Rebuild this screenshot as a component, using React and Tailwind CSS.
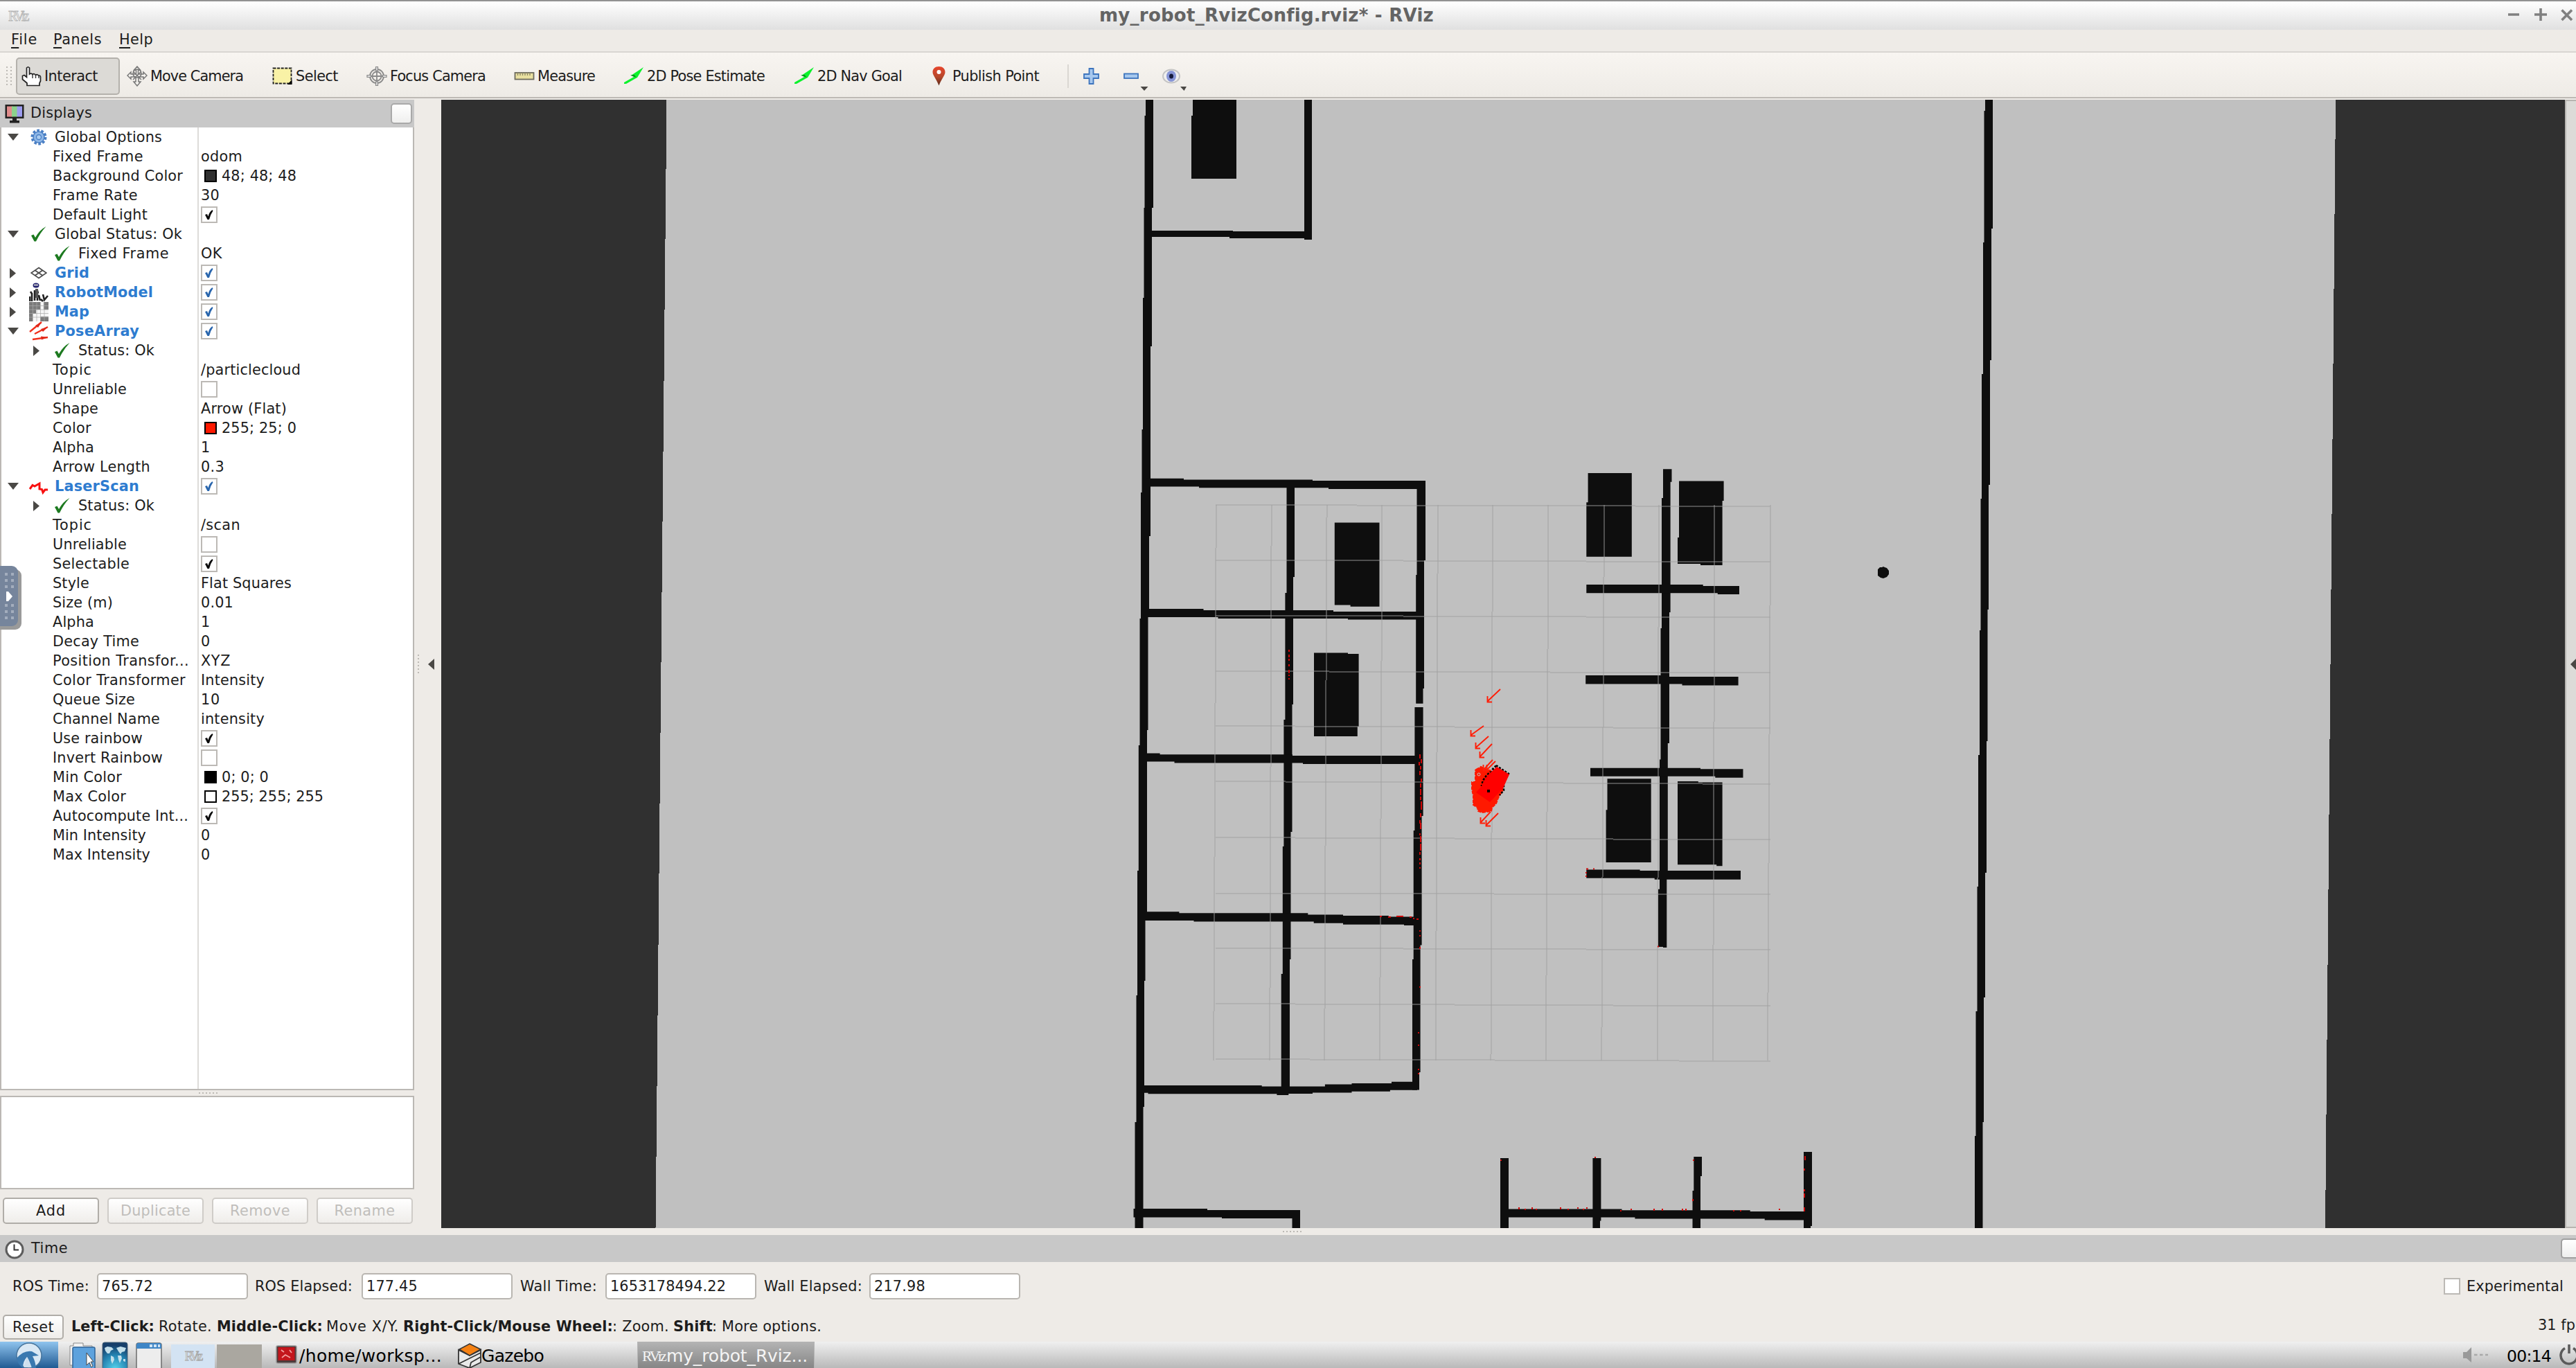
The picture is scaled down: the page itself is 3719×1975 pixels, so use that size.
import React, { useLayoutEffect, useRef } from "react";

/* Text whose tracking is adjusted so that it spans `w` pixels. */
function T({ w, children, className = "" }) {
  const ref = useRef(null);
  useLayoutEffect(() => {
    const el = ref.current;
    if (!w || !el) return;
    el.style.letterSpacing = "0px";
    const nat = el.getBoundingClientRect().width;
    el.style.letterSpacing = (w + 2 - nat) / el.textContent.length + "px";
  }, [w]);
  return (
    <span ref={ref} className={"inline-block whitespace-pre " + className}>
      {children}
    </span>
  );
}

/* ---------- toolbar icons ---------- */
const HandIcon = () => (
  <svg viewBox="0 0 30 30" className="w-[30px] h-[30px]">
    <path d="M9 28.500 V25 L2.500 19.500 V14.500 L5 13.500 L8.500 16.500 V3 Q10.500 0.500 12.500 3 V12 Q15 10 17 12.500 Q19.500 10.500 21.500 13.500 Q24 11.500 26 14.500 Q28 13.500 28.500 16 V22 L27 25 V28.500 Z" fill="#fff" stroke="#222" strokeWidth="1.700" />
    <path d="M17 12.500 V18 M21.500 13.500 V18 M26 14.500 V18" stroke="#444" strokeWidth="1.500" />
  </svg>
);
const MoveIcon = () => (
  <svg viewBox="0 0 30 30" className="w-[30px] h-[30px]" fill="none" stroke="#777" strokeWidth="1.500">
    <path d="M15 1 L19.500 6 H16.500 V12 H24 V9 L29 14 L24 19 V16 H17 V23 H20 L15 29 L10 23 H13 V16 H6 V19 L1 14 L6 9 V12 H13.500 V6 H10.500 Z" fill="#f4f2ee" />
    <circle cx="15" cy="11" r="6" />
    <path d="M9 20 L21 8 M9 8 L21 20" />
  </svg>
);
const SelectIcon = () => (
  <svg viewBox="0 0 30 30" className="w-[30px] h-[30px]">
    <rect x="1.500" y="3.500" width="26" height="22" fill="#f9f2a6" stroke="#222" strokeWidth="1.800" strokeDasharray="4 1.600" />
    <path d="M28.500 20 V27 H22 Z" fill="#000" />
  </svg>
);
const FocusIcon = () => (
  <svg viewBox="0 0 30 30" className="w-[30px] h-[30px]" fill="none" stroke="#8a8a8a" strokeWidth="1.800">
    <circle cx="15" cy="15" r="10" />
    <circle cx="15" cy="15" r="6.500" />
    <path d="M15 7 V23 M7 15 H23" />
    <path d="M13.500 1.500 H16.500 V7 H13.500 Z M13.500 23 H16.500 V28.500 H13.500 Z M1 13.500 H6.500 V16.500 H1 Z M23.500 13.500 H29 V16.500 H23.500 Z" fill="#ddd" strokeWidth="1.200" />
  </svg>
);
const RulerIcon = () => (
  <svg viewBox="0 0 30 30" className="w-[30px] h-[30px]">
    <rect x="1.500" y="10" width="27" height="9.500" fill="#e9e0a0" stroke="#6d6a5c" strokeWidth="1.800" />
    <path d="M5.500 10 V14 M9 10 V14 M12.500 10 V14 M16 10 V14 M19.500 10 V14 M23 10 V14" stroke="#8d8866" strokeWidth="1.400" />
  </svg>
);
const GreenArrow = () => (
  <svg viewBox="0 0 30 30" className="w-[30px] h-[30px]">
    <path d="M29 2 L11 14 L15 16 L1 24 V26 L4 26 L18 18 L20 17 Z" fill="#0cf22c" />
    <path d="M10 13.500 L19 17 L15.500 13 Z" fill="#0a8a1d" />
  </svg>
);
const PinIcon = () => (
  <svg viewBox="0 0 30 30" className="w-[30px] h-[30px]">
    <defs>
      <linearGradient id="pin" x1="0" y1="0" x2="0" y2="1">
        <stop offset="0" stopColor="#e8452c" />
        <stop offset=".55" stopColor="#b5472b" />
        <stop offset="1" stopColor="#5b2a1a" />
      </linearGradient>
    </defs>
    <path d="M14.500 1 C20 1 23.500 4.500 23.500 9 C23.500 14 18 19 14.500 28.500 C11 19 5.500 14 5.500 9 C5.500 4.500 9 1 14.500 1 Z" fill="url(#pin)" />
    <circle cx="14.500" cy="9" r="3" fill="#fff" />
  </svg>
);

const TOOLS = [
  { label: "Interact", w: 75, Icon: HandIcon, cls: "w-[150px] pl-[5px] h-[54px] rounded-[5px] border-2 border-[#b4b1ac] bg-[#dcdad6]" },
  { label: "Move Camera", w: 132, Icon: MoveIcon, cls: "w-[210px] pl-[10px]" },
  { label: "Select", w: 59, Icon: SelectIcon, cls: "w-[135px] pl-[10px]" },
  { label: "Focus Camera", w: 136, Icon: FocusIcon, cls: "w-[213px] pl-[11px]" },
  { label: "Measure", w: 81, Icon: RulerIcon, cls: "w-[158px] pl-[11px]" },
  { label: "2D Pose Estimate", w: 168, Icon: GreenArrow, cls: "w-[246px] pl-[11px]" },
  { label: "2D Nav Goal", w: 120, Icon: GreenArrow, cls: "w-[198px] pl-[11px]" },
  { label: "Publish Point", w: 123, Icon: PinIcon, cls: "w-[208px] pl-[8px]" },
];

/* ---------- tree icons ---------- */
const Gear = () => (
  <svg viewBox="0 0 24 24" className="w-[24px] h-[24px]">
    <circle cx="12" cy="12" r="9.500" fill="none" stroke="#4a7fc4" strokeWidth="4" strokeDasharray="3.600 2.370" />
    <circle cx="12" cy="12" r="8" fill="#8db6e6" stroke="#4a7fc4" strokeWidth="1.500" />
    <circle cx="12" cy="12" r="3.500" fill="#a9cbf0" stroke="#4a7fc4" strokeWidth="1.300" />
  </svg>
);
const Check = () => (
  <svg viewBox="0 0 24 24" className="w-[24px] h-[24px]">
    <path d="M1 14 L4.500 12.500 L7 17 Q13 6 22.500 1 Q14 10 8 22.500 L5.500 22.500 Z" fill="#1d7a20" />
  </svg>
);
const GridIcon = () => (
  <svg viewBox="0 0 24 24" className="w-[24px] h-[24px]" fill="none" stroke="#4a4a4a" strokeWidth="1.700">
    <path d="M12 4.500 L23 12 L12 19.500 L1 12 Z M6.500 8.200 L17.500 15.800 M17.500 8.200 L6.500 15.800" />
  </svg>
);
const RobotIcon = () => (
  <svg viewBox="0 0 28 28" className="w-[28px] h-[28px]">
    <ellipse cx="10" cy="4" rx="4.500" ry="3.500" fill="#23236f" />
    <rect x="7" y="2.500" width="6" height="2" fill="#ccc" />
    <path d="M2 13 L4 16 V27 M1 20 V27 M8 11 V26 M12 11 V26 M8 14 H14 M14 18 L16 26 M20 17 L22 25 L27 19 M17 24 L20 27" stroke="#222" strokeWidth="2.600" fill="none" />
    <path d="M9 9 H13 V22 H9 Z" fill="#555" />
  </svg>
);
const MapIcon = () => (
  <svg viewBox="0 0 28 28" className="w-[28px] h-[28px]">
    <path d="M0 0 H28 V28 H0 Z" fill="#f6f6f6" />
    <path d="M0 0 H16 V11 H10 V17 H5 V28 H0 Z M21 0 H28 V11 H21 Z M16 21 H28 V28 H16 Z" fill="#7b7b7b" />
    <path d="M5.500 0 V28 M11 0 V28 M16.500 0 V28 M22 0 V28 M0 5.500 H28 M0 11 H28 M0 16.500 H28 M0 22 H28" stroke="#a9a9a9" strokeWidth=".7" />
  </svg>
);
const PoseIcon = () => (
  <svg viewBox="0 0 28 28" className="w-[28px] h-[28px]" stroke="#f0301c" strokeWidth="2.400" fill="#e0281a">
    <path d="M1 15 L18 1 M8 18 L27 8 M5 26 L27 23" />
    <path d="M9 6 L18 1 L13 9 Z M17 11 L27 8 L20 15 Z M17 21.500 L27 23 L18 26.500 Z" stroke="none" />
  </svg>
);
const LaserIcon = () => (
  <svg viewBox="0 0 28 28" className="w-[28px] h-[28px]" fill="none" stroke="#f81010" strokeWidth="3">
    <path d="M1 18 L5 12.500 L8 14 L15 10 V18 L18.500 18.500 L20 23 L23 19 L27 19" />
  </svg>
);

const TriDown = () => (
  <svg viewBox="0 0 16 10" className="w-[16px] h-[10px]"><path d="M0 0 H16 L8 10 Z" fill="#4a4845" /></svg>
);
const TriRight = () => (
  <svg viewBox="0 0 9 15" className="w-[9px] h-[15px]"><path d="M0 0 L9 7.500 L0 15 Z" fill="#4a4845" /></svg>
);

function Box({ on, blue }) {
  return (
    <span className="flex w-[24px] h-[24px] items-center justify-center border-2 border-[#bcb9b5] bg-white">
      {on && (
        <svg viewBox="0 0 16 18" className="w-[16px] h-[18px]">
          <path d="M2 9 L5 8 L6.500 11.500 Q8 5 12.500 2 L13.500 3.500 Q9.500 9 8 16 H5.500 Z" fill={blue ? "#2a66ad" : "#0a0a0a"} />
        </svg>
      )}
    </span>
  );
}

const ROWS = [
  { lvl: 0, open: 1, icon: Gear, n: "Global Options", w: 153 },
  { n: "Fixed Frame", w: 129, v: "odom", vw: 58 },
  { n: "Background Color", w: 186, sw: "bg-[#303030]", v: "48; 48; 48", vw: 106 },
  { n: "Frame Rate", w: 121, v: "30", vw: 25 },
  { n: "Default Light", w: 135, box: 1 },
  { lvl: 0, open: 1, icon: Check, n: "Global Status: Ok", w: 182 },
  { lvl: 1, icon: Check, n: "Fixed Frame", w: 129, v: "OK", vw: 29 },
  { lvl: 0, open: 0, icon: GridIcon, n: "Grid", w: 48, bold: 1, box: 1 },
  { lvl: 0, open: 0, icon: RobotIcon, n: "RobotModel", w: 140, bold: 1, box: 1 },
  { lvl: 0, open: 0, icon: MapIcon, n: "Map", w: 48, bold: 1, box: 1 },
  { lvl: 0, open: 1, icon: PoseIcon, n: "PoseArray", w: 120, bold: 1, box: 1 },
  { lvl: 1, open: 0, icon: Check, n: "Status: Ok", w: 108 },
  { n: "Topic", w: 55, v: "/particlecloud", vw: 142 },
  { n: "Unreliable", w: 105, box: 0 },
  { n: "Shape", w: 64, v: "Arrow (Flat)", vw: 122 },
  { n: "Color", w: 54, sw: "bg-[#ff1900]", v: "255; 25; 0", vw: 106 },
  { n: "Alpha", w: 58, v: "1" },
  { n: "Arrow Length", w: 139, v: "0.3", vw: 32 },
  { lvl: 0, open: 1, icon: LaserIcon, n: "LaserScan", w: 120, bold: 1, box: 1 },
  { lvl: 1, open: 0, icon: Check, n: "Status: Ok", w: 108 },
  { n: "Topic", w: 55, v: "/scan", vw: 55 },
  { n: "Unreliable", w: 105, box: 0 },
  { n: "Selectable", w: 109, box: 1 },
  { n: "Style", w: 51, v: "Flat Squares", vw: 129 },
  { n: "Size (m)", w: 85, v: "0.01", vw: 45 },
  { n: "Alpha", w: 58, v: "1" },
  { n: "Decay Time", w: 123, v: "0" },
  { n: "Position Transfor...", w: 195, v: "XYZ", vw: 41 },
  { n: "Color Transformer", w: 190, v: "Intensity", vw: 90 },
  { n: "Queue Size", w: 117, v: "10", vw: 26 },
  { n: "Channel Name", w: 153, v: "intensity", vw: 90 },
  { n: "Use rainbow", w: 128, box: 1 },
  { n: "Invert Rainbow", w: 157, box: 0 },
  { n: "Min Color", w: 98, sw: "bg-black", v: "0; 0; 0", vw: 66 },
  { n: "Max Color", w: 104, sw: "bg-white", v: "255; 255; 255", vw: 145 },
  { n: "Autocompute Int...", w: 194, box: 1 },
  { n: "Min Intensity", w: 133, v: "0" },
  { n: "Max Intensity", w: 139, v: "0" },
];

function Row({ r }) {
  const Icon = r.icon;
  return (
    <div className="flex h-[28px]">
      <div className="flex w-[284px] h-[28px] items-center">
        {Icon ? (
          <>
            {r.lvl === 1 && <span className="w-[34px]" />}
            <span className="flex w-[33px] h-[28px] items-center justify-center shrink-0">
              {r.open === 1 ? <TriDown /> : r.open === 0 ? <TriRight /> : null}
            </span>
            <span className="flex w-[42px] items-center justify-center shrink-0"><Icon /></span>
            <span className="w-[2px] shrink-0" />
            <T w={r.w} className={r.bold ? "font-bold text-[#2e7cd0]" : ""}>{r.n}</T>
          </>
        ) : (
          <span className="pl-[74px]"><T w={r.w}>{r.n}</T></span>
        )}
      </div>
      <div className="flex items-center pl-[4px]">
        {r.box !== undefined && <Box on={r.box === 1} blue={r.bold} />}
        {r.sw && <span className={"ml-[5px] mr-[7px] w-[18px] h-[18px] border-2 border-black " + r.sw} />}
        {r.v && <T w={r.vw}>{r.v}</T>}
      </div>
    </div>
  );
}

/* ---------- map ---------- */
const WALLS = [
  "M1654 144 H1665 V300 H1663 V500 H1661 V774 H1659 V891 H1657.500 V1054 H1656 V1318 H1653.500 V1416 H1652 V1598 H1650.500 V1774 H1638.500 V1757.500 H1636.500 V1745 H1638.500 V1620 H1640.500 V1437 H1642 V1257 H1643.800 V1076 H1645.500 V893 H1647 V711 H1648.500 V620 H1650 V430 H1651.500 V300 H1652.500 V167 H1654 Z",
  "M1722 144 H1785 V258 H1720 V167 H1722 Z",
  "M1883 144 H1894 V346 H1883 V344 H1775 V342 H1655 V333 H1780 V334 H1883 Z",
  "M1640 1745 H1743 V1747 H1877 V1774 H1865.500 V1759 H1764 V1757.500 H1640 Z",
  "M1655 690.700 H1709 V692.500 H1895 V694 H2058 V809 H2056 V994 H2054.500 V1015.700 H2044.200 V830 H2045.500 V706 H1918 V704.300 H1731 V702.500 H1655 Z",
  "M1857.500 700 H1869 V833 H1867 V1017 H1865.500 V1201 H1863.500 V1385 H1862 V1575 H1849.700 V1406 H1851.800 V1222 H1853.400 V1039 H1855.400 V856 H1857.500 Z",
  "M2042.400 1021 H2054.600 V1178 H2052.600 V1364.600 H2050.600 V1548 H2049 V1573.500 H2039 V1385 H2040.700 V1199 H2042.400 Z",
  "M1650 879 H1737.500 V881 H1925 V883 H2050 V894.600 H1946 V893 H1758.500 V891 H1650 Z",
  "M1926.800 754.600 H1991.500 V875.700 H1949.600 V873.600 H1926.800 Z",
  "M1897 942.500 H1946 V944 H1961.600 V1049 H1959.800 V1063 H1897 Z",
  "M1650 1087.500 H1674.600 V1089.300 H1866 V1091 H2048 V1103 H1881 V1101.400 H1695.500 V1099.600 H1650 Z",
  "M1648 1316.300 H1702.400 V1318.300 H1888.300 V1320.600 H1939 V1322 H2004.800 V1323.600 H2046 V1336 H2027 V1334.700 H1939 V1332.800 H1896.700 V1330.500 H1723.500 V1329 H1648 Z",
  "M1645 1567 H1821.700 V1568.500 H1912.900 V1565.500 H1951.500 V1564 H2009 V1561.700 H2046 V1573.800 H2006.900 V1575.800 H1951.500 V1577.500 H1895 V1579 H1860.300 V1581 H1843.400 V1579.300 H1657.500 V1577.700 H1645 Z",
  "M2166 1672 H2178 V1745.400 H2299.400 V1672 H2311.400 V1745.400 H2341.500 V1747.300 H2443.500 V1719 H2445.300 V1670 H2457 V1698 H2455 V1747.300 H2526.700 V1749 H2604 V1663 H2616 V1770 H2614 V1774 H2604 V1761.400 H2547.700 V1759.500 H2455 V1774 H2443.500 V1759.500 H2360.400 V1757.600 H2311.400 V1762.600 H2310 V1774 H2299.400 V1757.600 H2178 V1774 H2166 Z",
  "M2401 677.300 H2413.500 V695.700 H2411.600 V884 H2410 V1073 H2407.800 V1269 H2406.300 V1368 H2401 V1367 H2394 V1283.700 H2396 V1096.600 H2397.500 V907 H2399 V719 H2401 Z",
  "M2292.600 683 H2355.800 V803.800 H2290.300 V725.300 H2292.600 Z",
  "M2424 694.500 H2488.600 V723 H2486.600 V816 H2455 V814 H2422 V776 H2424 Z",
  "M2290.300 844 H2458.700 V846 H2511 V858 H2479.800 V856.300 H2290.300 Z",
  "M2289.200 975 H2410 V977 H2509.600 V989.500 H2428.500 V987.500 H2289.200 Z",
  "M2296 1108.700 H2455 V1110.200 H2516.500 V1122.800 H2476.300 V1120.800 H2296 Z",
  "M2320.500 1124.200 H2383.700 V1245 H2318.600 V1169.300 H2320.500 Z",
  "M2422 1128 H2451.800 V1129.600 H2486.600 V1250.300 H2478.200 V1248.300 H2422 Z",
  "M2290.300 1255.600 H2367.600 V1257 H2513 V1269.700 H2388.700 V1267.700 H2290.300 Z",
  "M2866 144 H2877 V330 H2875 V520 H2873 V700 H2871 V880 H2869.500 V1070 H2868 V1260 H2866 V1440 H2864 V1620 H2862.500 V1774 H2851 V1640 H2852.500 V1460 H2854.500 V1280 H2856 V1090 H2858 V910 H2859.500 V720 H2861 V540 H2863 V350 H2864.500 V160 H2866 Z",
  "M2711 822 L2714 819 H2717 L2719 818 L2721 819 L2724 820 L2727 824 V829 L2724 833 L2719 835 L2715 834 L2711 831 Z",
];
const VX = [[1755.8, 1752.2], [1835.7, 1833.2], [1915.6, 1912.2], [1995.5, 1992], [2075.9, 2072.8], [2155, 2152.5], [2235.4, 2232], [2316, 2312.3], [2395, 2392.8], [2475.5, 2473], [2556.3, 2552]];
const HY = [[729, 731], [808.5, 811.5], [888.5, 891.5], [969, 971.5], [1048, 1051.5], [1128, 1132], [1209, 1212.5], [1289.5, 1291.5], [1368.5, 1371.5], [1449, 1452.5], [1529, 1532]];

const ARROWS = [[2166, 995, 2148, 1012], [2142, 1048, 2124, 1061], [2149, 1063, 2131, 1079], [2154, 1074, 2137, 1092], [2155, 1097, 2142, 1111], [2159, 1099, 2147, 1111], [2152, 1172, 2138, 1187], [2163, 1174, 2146, 1191]];

const LASER = "M1861 938 v3 M1861 945 v4 M1861 951 v3 M1861 959 v3 M1861 967 v5 M1861 974 v2 M1861 979 v2 M2050 1089 v6 M2052 1096 v6 M2049 1100 v5 M2051 1106 v5 M2050 1113 v6 M2052 1124 v5 M2051 1131 v6 M2051 1139 v9 M2051 1150 v5 M2052 1157 v12 M2051 1174 v6 M2050 1184 v5 M2051 1188 v9 M2050 1203 v3 M2051 1207 v9 M2051 1218 v10 M2050 1230 v4 M2050 1239 v3 M2050 1245 v3 M2050 1252 v2 M2050 1343 v2 M2050 1350 v2 M2050 1367 v3 M2050 1424 v2 M2048 1490 v2 M2048 1508 v2 M2048 1543 v2 M2048 1549 v2 M1992 1323 h3 M2004 1324 h4 M2016 1323 h10 M2035 1324 h3 M2040 1326 h2 M2045 1327 h3 M2290 1254.500 h3 M2300 1254.500 h2 M2290 1259 v2 M2290 1264 v2 M2393 1366.500 h2 M2193 1743 v3 M2202 1745 v2 M2212 1743 v3 M2218 1745 v2 M2253 1743 v3 M2264 1745 v2 M2278 1743 v2 M2286 1745 v2 M2291 1743 v2 M2340 1747 v2 M2355 1745 v2 M2388 1745 v3 M2400 1745 v3 M2429 1745 v3 M2434 1745 v3 M2503 1747 v2 M2513 1747 v2 M2569 1745 v2 M2605 1743 v6 M2605 1717 v3 M2605 1723 v6 M2605 1687 v3 M2606 1669 v6 M2167 1674 v2 M2303 1670 v2 M2445 1674 v2 M2444 1731 v3";

function Arrow({ a }) {
  const [x1, y1, x2, y2] = a;
  return <path d={`M${x1} ${y1} L${x2} ${y2} m-0.500 -7 v8.500 h6.500`} />;
}

function MapView() {
  return (
    <svg viewBox="637 144 3066 1629" className="block w-[3066px] h-[1629px] bg-[#303030]">
      <path d="M962.500 144 H3372 V149 L3357 1773 H946.500 Z" fill="#c0c0c0" shapeRendering="crispEdges" />
      <g fill="#0e0e0e">{WALLS.map((d, i) => <path key={i} d={d} />)}</g>
      <g stroke="#a0a0a0" strokeOpacity=".45" strokeWidth="2" shapeRendering="crispEdges">
        {VX.map(([a, b], i) => <line key={i} x1={a} y1="729" x2={b} y2="1531" />)}
        {HY.map(([a, b], i) => <line key={i} x1="1755" y1={a} x2="2556" y2={b} />)}
      </g>
      <path d={LASER} stroke="#d00808" strokeWidth="2" fill="none" />
      <path d="M2131 1111 L2138 1107 L2142 1109 L2150 1112 L2168 1122 L2170 1140 L2163 1152 L2160 1160 L2154 1166 L2153 1171 L2147 1172 L2140 1173 L2134 1171 L2133 1166 L2127 1162 V1149 L2125 1139 V1129 H2130 V1112 Z" fill="#ff1900" stroke="#ff1900" strokeWidth="2" strokeDasharray="5 1.500" />
      <circle cx="2135" cy="1118" r="2" fill="none" stroke="#c0c0c0" />
      <path d="M2160 1105 L2178 1117 L2171 1130 V1141 L2165 1148" fill="none" stroke="#000" strokeWidth="2.500" strokeDasharray="3 2" />
      <path d="M2160 1105.500 L2146 1120 L2141 1127 L2139 1135" fill="none" stroke="#000" strokeWidth="3" strokeDasharray="3 2" />
      <path d="M2161 1107 L2179 1118 L2170 1138 L2151 1158 L2131 1144 L2139 1135 Q2143 1124 2149 1118 Z" fill="#ff0000" />
      <rect x="2147" y="1140" width="4" height="4" fill="#000" />
      <g fill="none" stroke="#ff1e08" strokeWidth="1.900">{ARROWS.map((a, i) => <Arrow key={i} a={a} />)}</g>
    </svg>
  );
}

/* ---------- bottom area ---------- */
function Field({ label, lw, v, vw, gap }) {
  return (
    <>
      <span className={gap}><T w={lw}>{label}</T></span>
      <span className="flex h-[38px] w-[218px] items-center rounded-[5px] border-2 border-[#b9b6b1] bg-white pl-[5px]">
        <T w={vw}>{v}</T>
      </span>
    </>
  );
}

function Btn({ label, w, off }) {
  return (
    <div className={"flex h-[38px] w-[139px] items-center justify-center rounded-[5px] border-2 bg-gradient-to-b from-white to-[#efedea] " + (off ? "border-[#cfccc8] text-[#c0bebb]" : "border-[#b0ada8]")}>
      <T w={w}>{label}</T>
    </div>
  );
}

const Dots = ({ col }) => (
  <span className={"flex gap-[3px] " + (col ? "flex-col" : "")}>
    {[0, 1, 2, 3, 4, 5].map((i) => <span key={i} className="h-[2px] w-[2px] bg-[#bdbab5]" />)}
  </span>
);

export default function App() {
  return (
    <div className="relative flex h-[1975px] w-[3719px] flex-col overflow-hidden bg-[#eeebe7] font-['DejaVu_Sans',sans-serif] text-[20.800px] leading-[28px] text-[#1c1c1c]">
      {/* title bar */}
      <div className="flex h-[43px] shrink-0 items-center border-t-2 border-[#929292] bg-gradient-to-b from-white to-[#e0e0e0]">
        <div className="flex w-[1587px] pl-[12px]">
          <span className="font-['Liberation_Serif',serif] text-[20px] leading-[20px] tracking-[-3px] text-[#f2f2f2] [-webkit-text-stroke:0.8px_#b6b6b6]">RViz</span>
        </div>
        <T w={480} className="pb-[2px] text-[26px] font-bold leading-[36px] text-[#646464]">my_robot_RvizConfig.rviz* - RViz</T>
        <svg viewBox="0 0 98 24" className="ml-auto mr-[1px] h-[24px] w-[98px] mb-[2px]" stroke="#808080" strokeWidth="3.600">
          <path d="M1 11 H17 M39 11 H57 M48 2 V20 M78.500 4.500 L93 19 M93 4.500 L78.500 19" />
        </svg>
      </div>

      {/* menu bar */}
      <div className="flex h-[33px] shrink-0 items-center border-b-2 border-[#d9d6d2] pb-[3px]">
        <div className="w-[61px] ml-[16px]"><T w={36}><u className="underline-offset-4 decoration-2">F</u>ile</T></div>
        <div className="w-[95px]"><T w={68}><u className="underline-offset-4 decoration-2">P</u>anels</T></div>
        <div><T w={47}><u className="underline-offset-4 decoration-2">H</u>elp</T></div>
      </div>

      {/* toolbar */}
      <div className="flex h-[66px] shrink-0 items-center border-b-2 border-[#bdb9b4] bg-gradient-to-b from-[#f8f5f1] to-[#eeebe6] pt-[3px]">
        <div className="flex w-[23px] gap-[4px] pl-[9px]"><Dots col /><Dots col /></div>
        {TOOLS.map(({ label, w, Icon, cls }) => (
          <div key={label} className={"box-border flex shrink-0 items-center gap-[4px] " + cls}>
            <Icon />
            <T w={w}>{label}</T>
          </div>
        ))}
        <div className="h-[34px] w-[2px] bg-[#dad7d2]" />
        <svg viewBox="0 0 170 50" className="h-[50px] w-[170px]">
          <path d="M29.500 14 H35.500 V22 H43 V28 H35.500 V36 H29.500 V28 H22 V22 H29.500 Z" fill="#a7c8ee" stroke="#3d74bd" strokeWidth="1.800" />
          <rect x="80" y="21.500" width="20" height="6.500" fill="#a7c8ee" stroke="#3d74bd" strokeWidth="1.800" />
          <path d="M103.500 40 H114.500 L109 46 Z M161 40 H170 L166.500 46 Z" fill="#4a4845" />
          <ellipse cx="148" cy="25" rx="12" ry="9.500" fill="#efefef" stroke="#c4c4c4" strokeWidth="2" />
          <ellipse cx="148" cy="25" rx="7" ry="8" fill="#8795d6" />
          <ellipse cx="148" cy="25" rx="3" ry="3.500" fill="#151a3c" />
        </svg>
      </div>

      <div className="h-[2px] shrink-0" />

      {/* main area */}
      <div className="flex h-[1629px] shrink-0">
        <div className="flex w-[598px] flex-col">
          <div className="flex h-[40px] items-center bg-[#c8c8c8] pl-[6px] pr-[3px]">
            <svg viewBox="0 0 30 30" className="h-[30px] w-[30px]">
              <rect x="1.500" y="2" width="27" height="20" fill="#222" />
              <rect x="4" y="4.500" width="8" height="15" fill="#e08c8c" />
              <rect x="11" y="4.500" width="8" height="15" fill="#8cd28c" />
              <rect x="18.500" y="4.500" width="7.500" height="15" fill="#9c9cf0" />
              <path d="M12 22 H18 V25 H22 V28.500 H8 V25 H12 Z" fill="#222" />
            </svg>
            <span className="ml-[8px] pb-[2px]"><T w={87}>Displays</T></span>
            <span className="ml-auto h-[30px] w-[31px] rounded-[5px] border-2 border-[#a9a9a9] bg-gradient-to-b from-white to-[#efefee]" />
          </div>
          <div className="relative h-[1390px] border-x-2 border-b-2 border-[#bbb8b4] bg-white">
            <div className="flex flex-col">
              {ROWS.map((r, i) => <Row key={i} r={r} />)}
            </div>
            <div className="absolute left-[283px] top-0 h-full w-[2px] bg-[#dddbd9]" />
          </div>
          <div className="flex h-[8px] items-center pl-[287px]"><Dots /></div>
          <div className="h-[135px] border-2 border-[#bbb8b4] bg-white" />
          <div className="flex gap-[12px] pl-[4px] pt-[12px]">
            <Btn label="Add" w={41} />
            <Btn label="Duplicate" w={99} off />
            <Btn label="Remove" w={85} off />
            <Btn label="Rename" w={86} off />
          </div>
        </div>
        <div className="flex w-[39px] items-center gap-[13px] pl-[5px]">
          <Dots col />
          <svg viewBox="0 0 9 16" className="h-[16px] w-[9px]"><path d="M9 0 V16 L0 8 Z" fill="#4a4845" /></svg>
        </div>
        <MapView />
        <div className="flex flex-1 items-center justify-end border-l-2 border-y-2 border-[#b8b5b1] bg-[#dcdbd8]">
          <svg viewBox="0 0 8 16" className="h-[16px] w-[8px]"><path d="M8 0 V16 L0 8 Z" fill="#4a4845" /></svg>
        </div>
      </div>

      <div className="flex h-[10px] shrink-0 items-center pl-[1852px]"><Dots /></div>

      {/* time panel */}
      <div className="flex h-[39px] shrink-0 items-center bg-[#c8c8c8] pl-[6px]">
        <svg viewBox="0 0 30 30" className="h-[30px] w-[30px]">
          <circle cx="15" cy="16" r="12" fill="#fff" stroke="#5d5d5d" strokeWidth="3" />
          <path d="M14.500 8.500 V16.500 H21" fill="none" stroke="#333" strokeWidth="2" />
        </svg>
        <span className="ml-[9px] pb-[1px]"><T w={51}>Time</T></span>
        <span className="ml-auto h-[29px] w-[22px] rounded-l-[5px] border-2 border-r-0 border-[#a0a0a0] bg-gradient-to-b from-white to-[#efefee]" />
      </div>
      <div className="flex h-[70px] shrink-0 items-center">
        <Field gap="w-[122px] ml-[18px]" label="ROS Time:" lw={109} v="765.72" vw={72} />
        <Field gap="w-[154px] ml-[10px]" label="ROS Elapsed:" lw={139} v="177.45" vw={72} />
        <Field gap="w-[123px] ml-[11px]" label="Wall Time:" lw={109} v="1653178494.22" vw={165} />
        <Field gap="w-[152px] ml-[11px]" label="Wall Elapsed:" lw={140} v="217.98" vw={72} />
        <span className="ml-auto h-[24px] w-[24px] border-2 border-[#bcb9b5] bg-white" />
        <span className="ml-[9px] w-[158px]"><T w={138}>Experimental</T></span>
      </div>
      <div className="flex h-[45px] shrink-0 items-center pl-[4px]">
        <span className="mt-[3px] flex h-[36px] w-[88px] items-center justify-center rounded-[5px] border-2 border-[#b0ada8] bg-gradient-to-b from-white to-[#efedea]"><T w={58}>Reset</T></span>
        <div className="ml-[11px] flex">
          <span className="w-[126px]"><T w={118} className="font-bold">Left-Click:</T></span>
          <span className="w-[84px]"><T w={75}>Rotate.</T></span>
          <span className="w-[158px]"><T w={151} className="font-bold">Middle-Click:</T></span>
          <span className="w-[111px]"><T w={103}>Move X/Y.</T></span>
          <span className="w-[302px]"><T w={301} className="font-bold">Right-Click/Mouse Wheel:</T></span>
          <span className="w-[88px]"><T w={80}>: Zoom.</T></span>
          <span className="w-[56px]"><T w={55} className="font-bold">Shift</T></span>
          <T w={156}>: More options.</T>
        </div>
        <span className="ml-auto w-[55px] pb-[4px]"><T w={52}>31 fp</T></span>
      </div>

      {/* taskbar */}
      <div className="flex h-[38px] shrink-0 items-center bg-gradient-to-b from-[#f0f0f0] to-[#b9b9b9] text-[25px] leading-[38px]">
        <div className="flex h-[38px] w-[84px] justify-center bg-gradient-to-b from-[#8fc4ee] to-[#1f5b93]">
          <svg viewBox="0 0 40 38" className="h-[38px] w-[40px]">
            <circle cx="20" cy="20" r="18" fill="#d9e8f4" stroke="#47759c" strokeWidth="1.500" />
            <path d="M2 24 Q12 12 24 14 L34 20 L25 21 Q29 28 30 38 H24 Q20 26 17 22 Q11 28 11 38 Q3 32 2 24 Z" fill="#3a79b0" />
            <path d="M17 22 L23 37 H12 Z" fill="#cfe0ee" />
          </svg>
        </div>
        <svg viewBox="0 0 38 38" className="ml-[16px] h-[38px] w-[38px]">
          <path d="M1 6 H6 V2 H20 V6 H33 V34 H1 Z" fill="#f2f2f2" stroke="#888" />
          <rect x="5" y="8" width="32" height="32" rx="2" fill="#5da2dd" stroke="#2d6398" strokeWidth="1.500" />
          <path d="M25 16 V34 L29 30 L32 37 L34 35 L31 29 H35 Z" fill="#fff" stroke="#444" />
        </svg>
        <svg viewBox="0 0 38 38" className="ml-[9px] h-[38px] w-[38px]">
          <defs>
            <radialGradient id="glow" cx="0.5" cy="1" r="0.9">
              <stop offset="0" stopColor="#56d6ee" />
              <stop offset="0.6" stopColor="#2382b0" />
              <stop offset="1" stopColor="#173f6a" />
            </radialGradient>
          </defs>
          <rect x="1" y="1" width="36" height="39" rx="3" fill="url(#glow)" stroke="#4d6478" />
          <path d="M4 9 L8 7 L14 8 L17 11 L13 13 L11 17 L8 17 L5 13 Z M21 9 L27 7 L35 9 L33 14 L29 15 L27 18 L24 14 Z M13 20 L17 22 L18 26 L15 32 L13 27 Z M23 20 L28 20 L29 24 L26 31 L24 26 Z M31 25 L34 25 L34 29 L31 28 Z" fill="#c3dfea" />
        </svg>
        <svg viewBox="0 0 38 38" className="ml-[11px] h-[38px] w-[38px]">
          <rect x="1" y="2" width="36" height="38" rx="3" fill="#ededed" stroke="#6c6c6c" strokeWidth="1.500" />
          <path d="M1 10 V5 Q1 2 4 2 H34 Q37 2 37 5 V10 Z" fill="#3f86c6" />
          <path d="M20 6 H24 M26 6 H30 M32 6 H35" stroke="#cfe3f5" strokeWidth="4" />
        </svg>
        <div className="ml-[13px] mt-[4px] flex h-[34px] w-[63px] items-center justify-center bg-[#d3e3f3]">
          <span className="font-['Liberation_Serif',serif] text-[18px] leading-[34px] tracking-[-3px] text-[#f2f2f2] [-webkit-text-stroke:0.8px_#a6a6a6]">RViz</span>
        </div>
        <div className="ml-[3px] mt-[4px] h-[34px] w-[65px] bg-[#aaa7a0]" />
        <svg viewBox="0 0 32 30" className="ml-[20px] h-[30px] w-[32px]">
          <rect x="1" y="2" width="29" height="25" rx="2" fill="#4d3b3b" stroke="#999" strokeWidth="1.500" />
          <rect x="3.500" y="4" width="24" height="19" fill="#c3161c" />
          <path d="M8 8 L12 11 M20 8 L23 12 M9 19 L14 15 L21 19" stroke="#f3a0a0" strokeWidth="1.800" fill="none" />
        </svg>
        <span className="ml-[2px] w-[227px] pt-[3px] text-black"><T w={204}>/home/worksp...</T></span>
        <svg viewBox="0 0 38 38" className="h-[38px] w-[38px]">
          <path d="M3 12 V32 L19 38 L35 30 V12 L19 20 Z" fill="#e9e9e9" stroke="#333" strokeWidth="1.800" />
          <path d="M3 32 L19 24 L35 16 M19 38 L21 30 L35 22" stroke="#333" strokeWidth="1.800" fill="none" />
          <path d="M19 3 L35 11 L19 20 L4 11 Z" fill="#f58113" stroke="#333" strokeWidth="1.500" />
        </svg>
        <span className="-ml-[2px] w-[225px] pt-[3px] text-black"><T w={88}>Gazebo</T></span>
        <div className="flex h-[38px] w-[256px] items-center border-x border-[#b5b5b5] bg-gradient-to-b from-[#b4b4b4] to-[#868686] pl-[6px] pt-[3px] text-[#f4f4f4]">
          <span className="w-[35px] font-['Liberation_Serif',serif] text-[22px] leading-[30px] tracking-[-2.500px]">RViz</span>
          <T w={202}>my_robot_Rviz...</T>
        </div>
        <svg viewBox="0 0 40 30" className="ml-auto h-[30px] w-[40px]">
          <path d="M0 11 H5 L12 4 V26 L5 20 H0 Z" fill="#999" />
          <path d="M16 15 H36" stroke="#a9a9a9" strokeWidth="2.500" strokeDasharray="4.500 3.500" />
        </svg>
        <span className="ml-[23px] w-[76px] pt-[4px] text-[23.500px] text-black"><T w={62}>00:14</T></span>
        <svg viewBox="0 0 24 32" className="h-[32px] w-[24px]" fill="none" stroke="#5a5a5a" strokeWidth="3.500">
          <path d="M8 6.500 A12 12 0 1 0 20 6.500" />
          <path d="M14 1 V14" />
        </svg>
      </div>

      {/* side handle */}
      <div className="absolute left-0 top-[817px] h-[93px] w-[31px]">
        <div className="absolute left-0 top-[5px] h-[87px] w-[31px] rounded-r-[9px] bg-[#9a9a9a]" />
        <div className="absolute left-0 top-0 flex h-[87px] w-[26px] flex-col items-center justify-between rounded-r-[9px] bg-[#76859c] py-[10px]">
          {[0, 1].map((k) => (
            <React.Fragment key={k}>
              {k === 1 && (
                <svg viewBox="0 0 10 14" className="h-[14px] w-[10px]"><path d="M1 0 H4 L10 7 L4 14 H1 Z" fill="#fff" /></svg>
              )}
              <div className="grid grid-cols-2 gap-x-[5px] gap-y-[5px]">
                {[0, 1, 2, 3, 4, 5].map((i) => <span key={i} className="h-[4px] w-[4px] bg-[#a3adbd]" />)}
              </div>
            </React.Fragment>
          ))}
        </div>
      </div>
    </div>
  );
}
